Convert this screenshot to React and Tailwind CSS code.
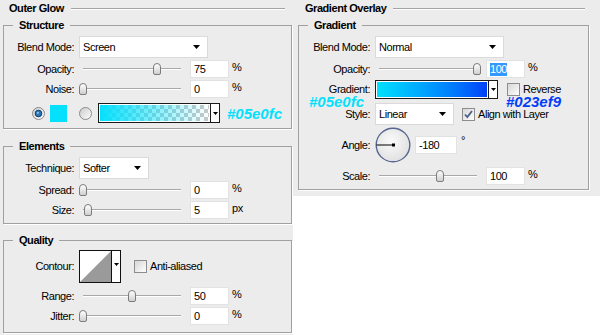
import React from "react";

const Arrow = () => (
  <svg width="7" height="4" viewBox="0 0 7 4" className="shrink-0">
    <path d="M0 0h7L3.5 4z" fill="#000" />
  </svg>
);

const Select = ({ value, w }) => (
  <div className={`flex h-[22px] shrink-0 items-center justify-between border border-[#dadada] bg-white pl-[3px] pr-[7px] ${w}`}>
    <span>{value}</span>
    <Arrow />
  </div>
);

const Slider = ({ pos }) => (
  <div className="relative h-[18px] w-[107px] shrink-0">
    <div className="absolute left-[4px] top-[8px] h-[2px] w-[98px] border-t border-[#a9a9a9] bg-white" />
    <div
      className="absolute top-[3px] h-[12px] w-[8px] rounded-t-[4px] rounded-b-[2px] border border-[#7c7c7c] bg-linear-to-b from-white to-[#cfcfcf]"
      style={{ left: Math.round(pos * 0.98) }}
    />
  </div>
);

const Num = ({ children, w = "w-[39px]" }) => (
  <div className={`flex h-[18px] shrink-0 items-center border border-[#e2e2e2] bg-white pl-[3px] ${w}`}>
    {children}
  </div>
);

const Label = ({ children, w = "w-[70px]" }) => (
  <div className={`shrink-0 text-right ${w}`}>{children}</div>
);

const SliderRow = ({ label, value, pos, unit, lw }) => (
  <div className="flex h-[18px] items-center">
    <Label w={lw}>{label}</Label>
    <div className="ml-[5px]">
      <Slider pos={pos} />
    </div>
    <div className="ml-[4px]">
      <Num>{value}</Num>
    </div>
    <span className="-mt-[4px] ml-[3px]">{unit}</span>
  </div>
);

const Radio = ({ on }) => (
  <svg width="13" height="13" viewBox="0 0 13 13" className="shrink-0">
    <defs>
      <linearGradient id={on ? "ra" : "rb"} x1="0" y1="0" x2="1" y2="1">
        <stop offset="0" stopColor="#c9c9c9" />
        <stop offset="1" stopColor="#ffffff" />
      </linearGradient>
    </defs>
    <circle cx="6.5" cy="6.5" r="6" fill={`url(#${on ? "ra" : "rb"})`} stroke="#8a8a8a" />
    {on && <circle cx="6.5" cy="6.5" r="3.3" fill="#2b74b5" stroke="#103f6b" strokeWidth="1" />}
    {on && <circle cx="5.8" cy="5.8" r="1.1" fill="#8cc4f2" />}
  </svg>
);

const Check = ({ on }) => (
  <div className="flex h-[13px] w-[13px] shrink-0 items-center justify-center border border-[#8d8d8d] bg-linear-to-br from-[#d6d6d6] to-white">
    {on && (
      <svg width="9" height="9" viewBox="0 0 9 9">
        <path d="M1 4.5l2.3 2.5L8 1" fill="none" stroke="#4b5f8f" strokeWidth="1.8" />
      </svg>
    )}
  </div>
);

const Title = ({ children, pl, mr }) => (
  <div className={`flex h-[17px] items-center font-bold ${pl}`}>
    <span>{children}</span>
    <div className={`ml-[7px] h-[2px] flex-1 border-t border-[#a3a3a3] bg-white ${mr}`} />
  </div>
);

const Legend = ({ children }) => (
  <legend className="ml-[9px] px-[6px] font-bold leading-[14px]">{children}</legend>
);

export default function App() {
  return (
    <div className="flex h-[335px] w-[600px] bg-white font-['Liberation_Sans',Arial,sans-serif] text-[11px] leading-[13px] tracking-[-0.45px] text-black">
      {/* Outer Glow */}
      <div className="h-[335px] w-[293px] shrink-0 bg-[#ececec]">
        <Title pl="pl-[9px]" mr="mr-[8px]">Outer Glow</Title>

        <fieldset className="mx-[3px] mt-[1px] w-[289px] border border-[#a0a0a0] shadow-[1px_1px_0_#fff]">
          <Legend>Structure</Legend>
          <div className="flex flex-col gap-[2px] pb-[5px] pt-[4px]">
            <div className="flex h-[22px] items-center">
              <Label>Blend Mode:</Label>
              <div className="ml-[5px]">
                <Select value="Screen" w="w-[129px]" />
              </div>
            </div>
            <SliderRow label="Opacity:" value="75" pos={75} unit="%" />
            <SliderRow label="Noise:" value="0" pos={0} unit="%" />
            <div className="mt-[3px] flex h-[20px] items-center">
              <div className="ml-[28px]">
                <Radio on />
              </div>
              <div className="ml-[5px] h-[17px] w-[17px] bg-[#05e0fc]" />
              <div className="ml-[12px]">
                <Radio />
              </div>
              <div className="ml-[6px] flex h-[20px] w-[122px] border border-[#1a1a1a] bg-white">
                <div className="m-[1px] flex-1 bg-[length:100%_100%,8px_8px] bg-[image:linear-gradient(to_right,#05e0fc,rgba(5,224,252,0)),repeating-conic-gradient(#c8c8c8_0_25%,#ffffff_0_50%)]" />
                <div className="flex w-[9px] items-center justify-center border-l border-[#1a1a1a] bg-white">
                  <svg width="5" height="3" viewBox="0 0 5 3">
                    <path d="M0 0h5L2.5 3z" fill="#000" />
                  </svg>
                </div>
              </div>
              <span className="ml-[7px] text-[15px] font-bold italic tracking-normal text-[#05e0fc]">#05e0fc</span>
            </div>
          </div>
        </fieldset>

        <fieldset className="mx-[3px] mt-[10px] w-[289px] border border-[#a0a0a0] shadow-[1px_1px_0_#fff]">
          <Legend>Elements</Legend>
          <div className="flex flex-col gap-[2px] pb-[4px] pt-[4px]">
            <div className="flex h-[22px] items-center">
              <Label>Technique:</Label>
              <div className="ml-[5px]">
                <Select value="Softer" w="w-[70px]" />
              </div>
            </div>
            <SliderRow label="Spread:" value="0" pos={0} unit="%" />
            <SliderRow label="Size:" value="5" pos={5} unit="px" />
          </div>
        </fieldset>

        <fieldset className="mx-[3px] mt-[9px] w-[289px] border border-[#a0a0a0] shadow-[1px_1px_0_#fff]">
          <Legend>Quality</Legend>
          <div className="flex flex-col gap-[2px] pb-[7px] pt-[3px]">
            <div className="mb-[2px] flex h-[33px] items-center">
              <Label>Contour:</Label>
              <div className="ml-[5px] flex h-[33px] w-[42px] border border-[#111] bg-white">
                <svg width="31" height="31" viewBox="0 0 31 31" className="shrink-0">
                  <path d="M0 31L31 0V31z" fill="#9a9a9a" />
                </svg>
                <div className="flex w-[9px] justify-center border-l border-[#111] pt-[12px]">
                  <svg width="5" height="3" viewBox="0 0 5 3">
                    <path d="M0 0h5L2.5 3z" fill="#000" />
                  </svg>
                </div>
              </div>
              <div className="ml-[13px]">
                <Check />
              </div>
              <span className="ml-[3px]">Anti-aliased</span>
            </div>
            <SliderRow label="Range:" value="50" pos={50} unit="%" />
            <SliderRow label="Jitter:" value="0" pos={0} unit="%" />
          </div>
        </fieldset>
      </div>

      {/* Gradient Overlay */}
      <div className="h-[196px] w-[307px] shrink-0 bg-[#ececec]">
        <Title pl="pl-[12px]" mr="mr-[15px]">Gradient Overlay</Title>

        <fieldset className="ml-[5px] mt-[1px] w-[291px] border border-[#a0a0a0] shadow-[1px_1px_0_#fff]">
          <Legend>Gradient</Legend>
          <div className="relative flex flex-col gap-[2px] pb-[4px] pt-[4px]">
            <div className="flex h-[22px] items-center">
              <Label w="w-[71px]">Blend Mode:</Label>
              <div className="ml-[5px]">
                <Select value="Normal" w="w-[129px]" />
              </div>
            </div>
            <div className="flex h-[18px] items-center">
              <Label w="w-[71px]">Opacity:</Label>
              <div className="ml-[5px]">
                <Slider pos={100} />
              </div>
              <div className="ml-[4px]">
                <Num>
                  <span className="bg-[#3399ff] text-white">100</span>
                </Num>
              </div>
              <span className="-mt-[4px] ml-[3px]">%</span>
            </div>
            <div className="flex h-[19px] items-center">
              <Label w="w-[71px]">Gradient:</Label>
              <div className="ml-[5px] flex h-[19px] w-[123px] border border-[#1a1a1a] bg-white">
                <div className="m-[1px] flex-1 bg-linear-to-r from-[#05e0fc] to-[#023ef9]" />
                <div className="flex w-[9px] items-center justify-center border-l border-[#1a1a1a] bg-white">
                  <svg width="5" height="3" viewBox="0 0 5 3">
                    <path d="M0 0h5L2.5 3z" fill="#000" />
                  </svg>
                </div>
              </div>
              <div className="ml-[9px]">
                <Check />
              </div>
              <span className="ml-[3px]">Reverse</span>
            </div>
            <div className="mt-[2px] flex h-[22px] items-center">
              <Label w="w-[71px]">Style:</Label>
              <div className="ml-[5px]">
                <Select value="Linear" w="w-[79px]" />
              </div>
              <div className="ml-[8px]">
                <Check on />
              </div>
              <span className="ml-[3px]">Align with Layer</span>
            </div>
            <div className="flex h-[36px] items-center">
              <Label w="w-[71px]">Angle:</Label>
              <svg width="36" height="36" viewBox="0 0 36 36" className="ml-[5px] shrink-0">
                <defs>
                  <radialGradient id="dial" cx="45%" cy="40%" r="65%">
                    <stop offset="0" stopColor="#fbfbfb" />
                    <stop offset="1" stopColor="#dedede" />
                  </radialGradient>
                </defs>
                <circle cx="18" cy="18" r="16.8" fill="url(#dial)" stroke="#57678f" strokeWidth="1.4" />
                <line x1="1.5" y1="18" x2="18" y2="18" stroke="#000" strokeWidth="1" />
                <rect x="17" y="16.5" width="3" height="3" fill="#000" />
              </svg>
              <div className="ml-[4px]">
                <Num w="w-[42px]">-180</Num>
              </div>
              <span className="-mt-[10px] ml-[4px]">°</span>
            </div>
            <div className="mt-[2px]">
              <SliderRow label="Scale:" value="100" pos={62} unit="%" lw="w-[71px]" />
            </div>
            <span className="absolute left-[10px] top-[62px] text-[15px] font-bold italic leading-[15px] tracking-normal text-[#05e0fc]">#05e0fc</span>
            <span className="absolute left-[207px] top-[62px] text-[15px] font-bold italic leading-[15px] tracking-normal text-[#023ef9]">#023ef9</span>
          </div>
        </fieldset>
      </div>
    </div>
  );
}
